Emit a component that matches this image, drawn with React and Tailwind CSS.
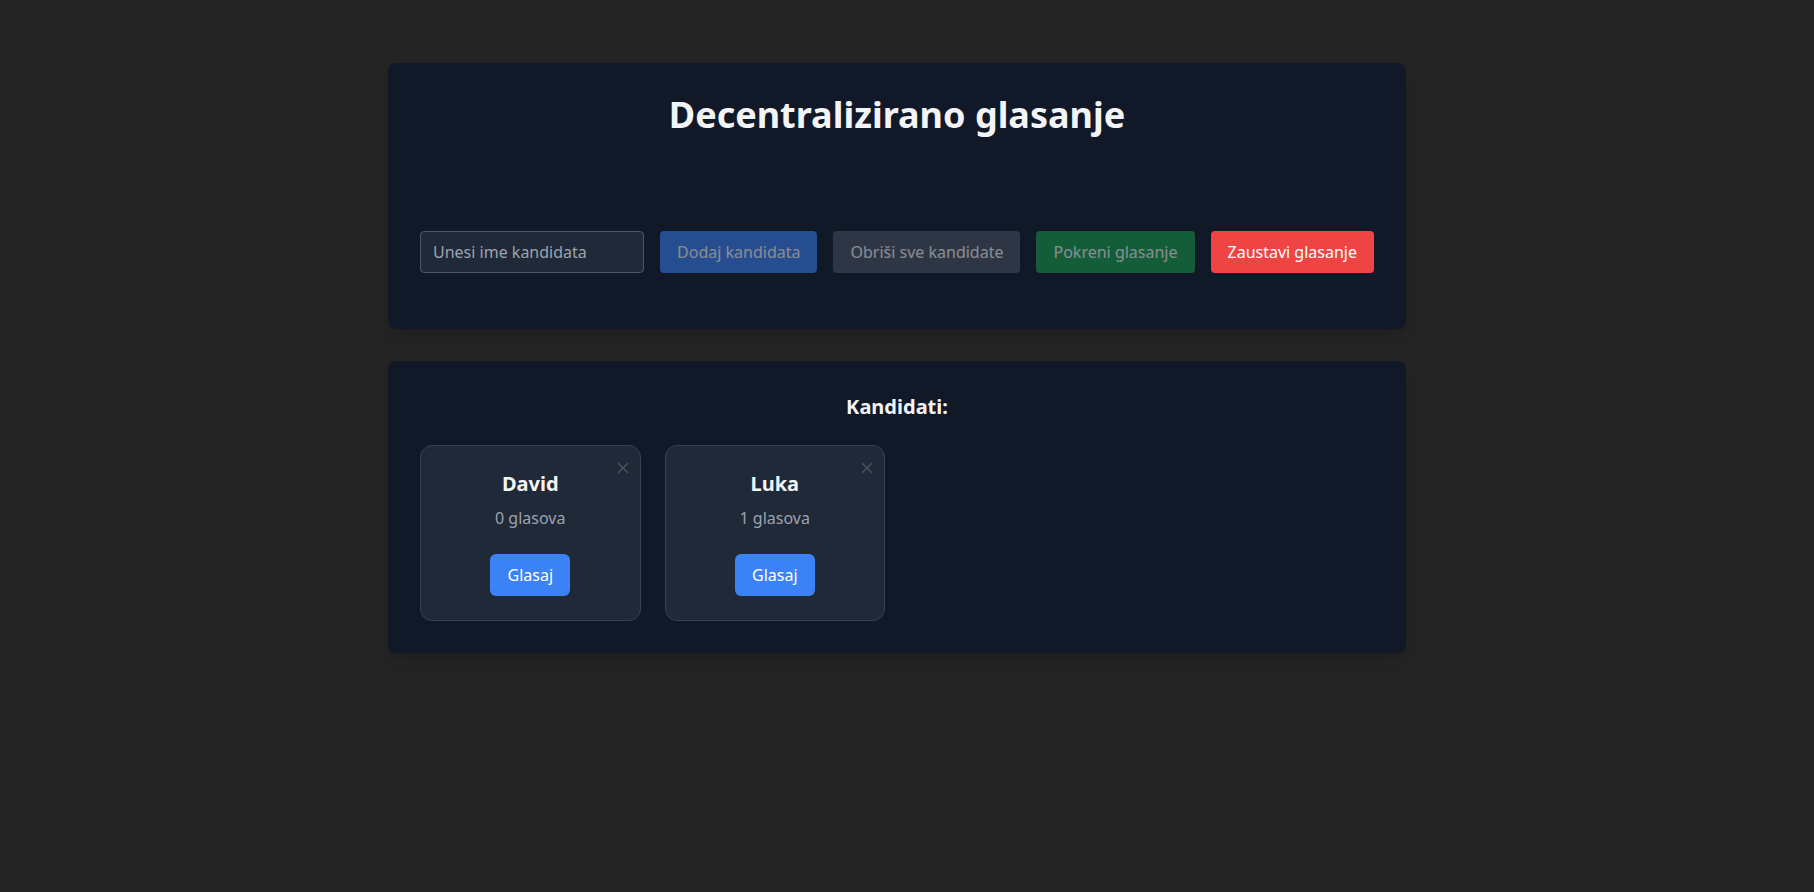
import React, { useState } from "react";

const initialCandidates = [
  { id: 1, name: "David", votes: 0 },
  { id: 2, name: "Luka", votes: 1 },
];

function CandidateCard({ candidate, onVote, onRemove }) {
  return (
    <div className="relative bg-[#1f2937] border border-[#374151] rounded-xl p-6 flex flex-col items-center">
      <button
        onClick={() => onRemove(candidate.id)}
        className="absolute top-[16px] right-[11px] text-[#4b5563] hover:text-[#9ca3af]"
        title="Ukloni"
      >
        <svg width="12" height="12" viewBox="0 0 12 12" fill="none">
          <path d="M1.5 1.5l9 9M10.5 1.5l-9 9" stroke="currentColor" strokeWidth="1.4" strokeLinecap="round" />
        </svg>
      </button>
      <h3 className="text-xl leading-7 font-bold text-[#f3f4f6]">{candidate.name}</h3>
      <p className="mt-2 text-base leading-6 text-[#9ca3af]">{candidate.votes} glasova</p>
      <button
        onClick={() => onVote(candidate.id)}
        className="mt-6 h-[42px] px-[17px] bg-[#3b82f6] hover:bg-[#2563eb] text-white text-base rounded-md"
      >
        Glasaj
      </button>
    </div>
  );
}

export default function App() {
  const [candidates, setCandidates] = useState(initialCandidates);
  const [name, setName] = useState("");

  const vote = (id) =>
    setCandidates((list) => list.map((c) => (c.id === id ? { ...c, votes: c.votes + 1 } : c)));

  const remove = (id) => setCandidates((list) => list.filter((c) => c.id !== id));

  return (
    <div
      className="min-h-screen bg-[#242424] pt-[63px] pb-10"
      style={{ fontFamily: '"Noto Sans", "Open Sans", sans-serif' }}
    >
      <div className="ml-[388px] w-[1018px]">
        {/* upravljanje */}
        <div className="bg-[#111827] rounded-lg p-8 shadow-lg">
          <h1 className="text-4xl leading-10 font-bold text-[#f3f4f6] text-center">
            Decentralizirano glasanje
          </h1>

          <div className="mt-[96px] mb-6 flex gap-4">
            <input
              value={name}
              onChange={(e) => setName(e.target.value)}
              placeholder="Unesi ime kandidata"
              className="flex-1 min-w-0 h-[42px] px-3 bg-[#1f2937] border border-[#4b5563] rounded text-base text-[#f3f4f6] placeholder:text-[#9ca3af] outline-none"
            />
            <button disabled className="h-[42px] px-[17px] bg-[#3b82f6] text-white text-base rounded opacity-50">
              Dodaj kandidata
            </button>
            <button disabled className="h-[42px] px-[17px] bg-[#4b5563] text-white text-base rounded opacity-50">
              Obriši sve kandidate
            </button>
            <button disabled className="h-[42px] px-[17px] bg-[#16a34a] text-white text-base rounded opacity-50">
              Pokreni glasanje
            </button>
            <button className="h-[42px] px-[17px] bg-[#ef4444] hover:bg-[#dc2626] text-white text-base rounded">
              Zaustavi glasanje
            </button>
          </div>
        </div>

        {/* kandidati */}
        <div className="mt-[32px] bg-[#111827] rounded-lg p-8 shadow-lg">
          <h2 className="text-xl leading-7 font-bold text-[#f3f4f6] text-center mb-6">Kandidati:</h2>
          <div className="grid grid-cols-4 gap-6">
            {candidates.map((c) => (
              <CandidateCard key={c.id} candidate={c} onVote={vote} onRemove={remove} />
            ))}
          </div>
        </div>
      </div>
    </div>
  );
}
